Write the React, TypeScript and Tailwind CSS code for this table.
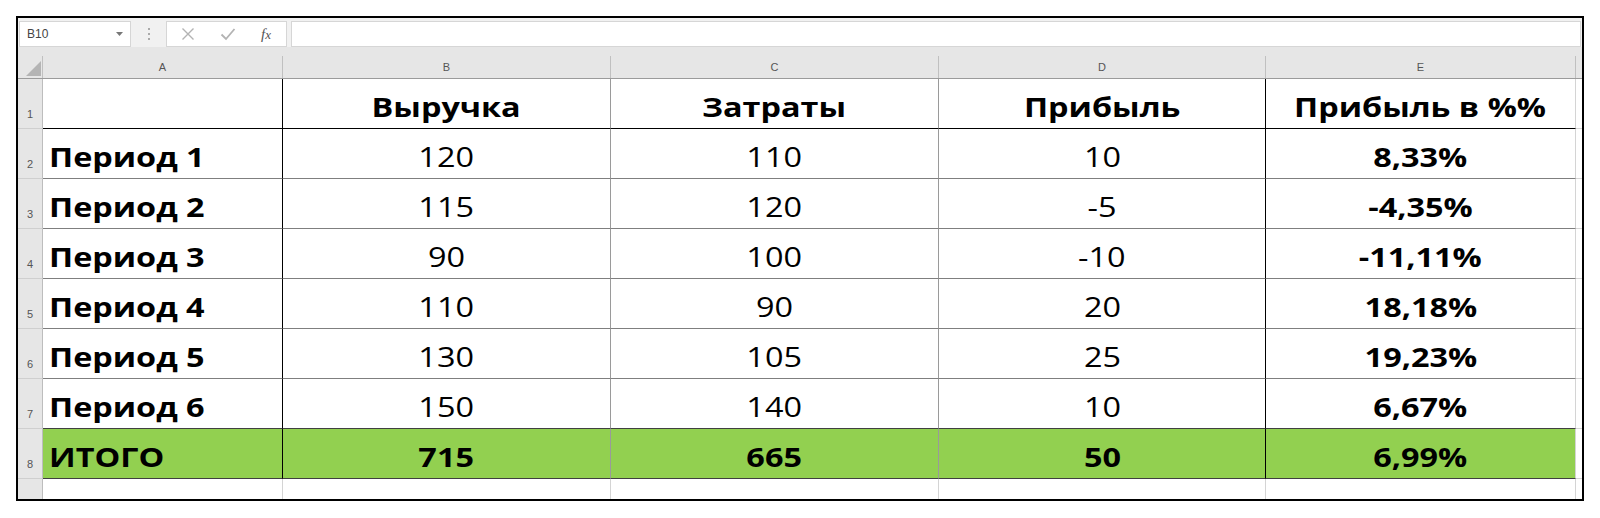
import React from "react";

const COLS = [
  { key: "A", w: "w-[240px]" },
  { key: "B", w: "w-[328px]" },
  { key: "C", w: "w-[328px]" },
  { key: "D", w: "w-[327px]" },
  { key: "E", w: "w-[310px]" },
];

type Row = { n: number; cells: string[]; total?: boolean };

const ROWS: Row[] = [
  { n: 1, cells: ["", "Выручка", "Затраты", "Прибыль", "Прибыль в %%"] },
  { n: 2, cells: ["Период 1", "120", "110", "10", "8,33%"] },
  { n: 3, cells: ["Период 2", "115", "120", "-5", "-4,35%"] },
  { n: 4, cells: ["Период 3", "90", "100", "-10", "-11,11%"] },
  { n: 5, cells: ["Период 4", "110", "90", "20", "18,18%"] },
  { n: 6, cells: ["Период 5", "130", "105", "25", "19,23%"] },
  { n: 7, cells: ["Период 6", "150", "140", "10", "6,67%"] },
  { n: 8, cells: ["ИТОГО", "715", "665", "50", "6,99%"], total: true },
];

function bottomBorder(n: number) {
  if (n === 1) return "border-b-black";
  if (n === 7 || n === 8) return "border-b-[#404040]";
  return "border-b-[#7f7f7f]";
}

function rightBorder(ci: number) {
  if (ci === 0 || ci === 3) return "border-r-black";
  if (ci === 4) return "border-r-[#d4d4d4]";
  return "border-r-[#9a9a9a]";
}

export default function App() {
  return (
    <div className="w-[1600px] h-[518px] bg-white pt-[16px] pl-[16px]">
      <div className="w-[1568px] h-[485px] border-2 border-black bg-white flex flex-col overflow-hidden">
        {/* formula bar */}
        <div className="h-[29px] bg-[#f1f1f1] flex items-end pl-px">
          <div className="w-[112px] h-[26px] bg-white border border-[#d6d6d6] flex items-center justify-between pl-[7px] pr-[7px]">
            <span className="font-['Liberation_Sans',sans-serif] text-[12px] text-[#444]">B10</span>
            <svg width="7" height="4" viewBox="0 0 7 4">
              <path d="M0 0 L7 0 L3.5 4 Z" fill="#777" />
            </svg>
          </div>
          <div className="w-[35px] h-[26px] flex items-center justify-center">
            <div className="flex flex-col gap-[3px]">
              <div className="w-[2px] h-[2px] bg-[#aaa]" />
              <div className="w-[2px] h-[2px] bg-[#aaa]" />
              <div className="w-[2px] h-[2px] bg-[#aaa]" />
            </div>
          </div>
          <div className="w-[121px] h-[26px] bg-white border border-[#d6d6d6] flex items-center pl-[12px]">
            <svg width="14" height="14" viewBox="0 0 14 14" className="ml-[2px]">
              <path d="M1.5 1.5 L12.5 12.5 M12.5 1.5 L1.5 12.5" stroke="#b3b3b3" strokeWidth="1.4" />
            </svg>
            <svg width="16" height="14" viewBox="0 0 16 14" className="ml-[25px]">
              <path d="M1.5 7.5 L6 12 L14.5 2" stroke="#b3b3b3" strokeWidth="1.8" fill="none" />
            </svg>
            <span className="ml-[25px] font-['Liberation_Serif',serif] italic text-[15px] text-[#555] leading-none">
              f<span className="text-[13px]">x</span>
            </span>
          </div>
          <div className="ml-[4px] flex-1 h-[26px] bg-white border border-[#d6d6d6] mr-[1px]" />
        </div>

        {/* column header */}
        <div className="h-[32px] bg-[#e6e6e6] flex items-end border-b border-b-[#9b9b9b]">
          <div className="w-[25px] h-[22px] border-r border-r-[#c0c0c0] relative">
            <svg width="15" height="15" viewBox="0 0 15 15" className="absolute left-[8px] top-[5px]">
              <path d="M15 0 L15 15 L0 15 Z" fill="#b4b4b4" />
            </svg>
          </div>
          {COLS.map((c) => (
            <div
              key={c.key}
              className={`${c.w} h-[22px] flex items-center justify-center font-['Liberation_Sans',sans-serif] text-[11px] text-[#555] border-r border-r-[#c0c0c0]`}
            >
              {c.key}
            </div>
          ))}
          <div className="flex-1 h-[22px]" />
        </div>

        {/* rows */}
        {ROWS.map((r) => (
          <div key={r.n} className="h-[50px] flex">
            <div className="w-[25px] h-[50px] bg-[#e6e6e6] border-r border-r-[#bdbdbd] border-b border-b-[#cfcfcf] flex items-end justify-center pb-[6px] font-['Liberation_Sans',sans-serif] text-[11px] text-[#555]">
              {r.n}
            </div>
            {COLS.map((c, ci) => {
              const bold = r.n === 1 || ci === 0 || ci === 4 || r.total;
              return (
                <div
                  key={c.key}
                  className={`${c.w} h-[50px] border-r border-b ${rightBorder(ci)} ${bottomBorder(r.n)} ${
                    r.total ? "bg-[#92d050]" : "bg-white"
                  } flex items-end pb-[4px] ${ci === 0 ? "justify-start pl-[6px]" : "justify-center"} font-['Open_Sans',sans-serif] text-[27px] leading-[34px] text-black ${
                    bold ? "font-bold" : "font-normal"
                  }`}
                >
                  <span className={`inline-block whitespace-nowrap scale-x-[1.2] ${ci === 0 ? "origin-left" : "origin-center"}`}>
                    {r.cells[ci]}
                  </span>
                </div>
              );
            })}
            <div className="flex-1 h-[50px] border-b border-b-[#d4d4d4]" />
          </div>
        ))}

        {/* row 9 */}
        <div className="h-[20px] flex">
          <div className="w-[25px] h-[20px] bg-[#e6e6e6] border-r border-r-[#bdbdbd]" />
          {COLS.map((c) => (
            <div key={c.key} className={`${c.w} h-[20px] border-r border-r-[#d4d4d4] bg-white`} />
          ))}
          <div className="flex-1" />
        </div>
      </div>
    </div>
  );
}
